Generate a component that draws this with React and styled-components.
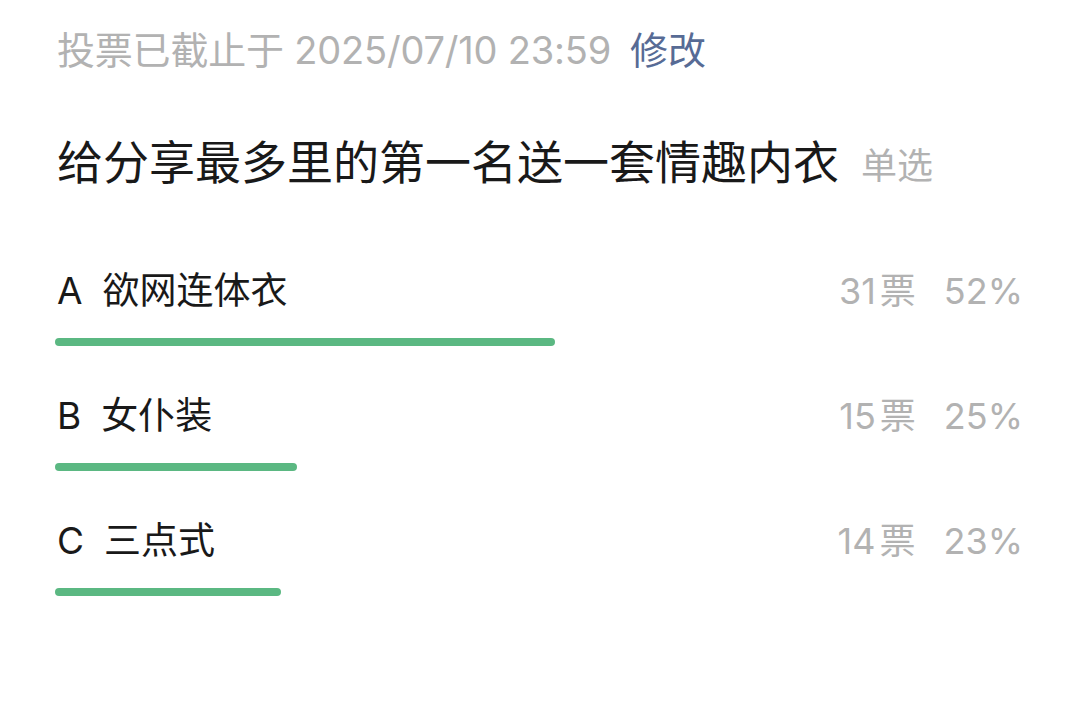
import React from "react";
import styled, { createGlobalStyle } from "styled-components";

const GlobalStyle = createGlobalStyle`
  body {
    margin: 0;
    background: #fff;
    font-family: "Inter", "Noto Sans CJK SC", sans-serif;
  }
`;

const options = [
  { key: "A", name: "欲网连体衣", votes: 31 },
  { key: "B", name: "女仆装", votes: 15 },
  { key: "C", name: "三点式", votes: 14 },
];

const total = options.reduce((sum, o) => sum + o.votes, 0);

const App = () => {
  return (
    <>
      <GlobalStyle />
      <Poll>
        <Deadline>
          投票已截止于 2025/07/10 23:59
          <EditLink>修改</EditLink>
        </Deadline>
        <Title>
          给分享最多里的第一名送一套情趣内衣
          <TypeTag>单选</TypeTag>
        </Title>
        <OptionList>
          {options.map((o) => {
            const pct = (o.votes / total) * 100;
            return (
              <Option key={o.key}>
                <OptionRow>
                  <OptionLabel>
                    <OptionKey>{o.key}</OptionKey>
                    {o.name}
                  </OptionLabel>
                  <Stats>
                    <span>
                      {o.votes}
                      <Unit>票</Unit>
                    </span>
                    <span>{Math.round(pct)}%</span>
                  </Stats>
                </OptionRow>
                <Bar style={{ width: `${pct}%` }} />
              </Option>
            );
          })}
        </OptionList>
      </Poll>
    </>
  );
};

export default App;

const Poll = styled.div`
  padding: 27px 57px 0 55px;
`;

const Deadline = styled.div`
  font-size: 38px;
  line-height: 46px;
  color: #b2b2b2;
  padding-left: 2px;
  letter-spacing: -0.2px;
`;

const EditLink = styled.span`
  color: #576b95;
  margin-left: 19px;
  letter-spacing: 0;
`;

const Title = styled.div`
  margin-top: 61px;
  font-size: 46px;
  line-height: 56px;
  color: #191919;
  padding-left: 2px;
`;

const TypeTag = styled.span`
  font-size: 36px;
  color: #b2b2b2;
  margin-left: 22px;
`;

const OptionList = styled.div`
  margin-top: 67px;
  display: flex;
  flex-direction: column;
  gap: 40px;
`;

const Option = styled.div`
  display: flex;
  flex-direction: column;
  gap: 29px;
`;

const OptionRow = styled.div`
  display: flex;
  justify-content: space-between;
  align-items: baseline;
  height: 48px;
  padding-left: 2px;
`;

const OptionLabel = styled.div`
  font-size: 37px;
  color: #191919;
`;

const OptionKey = styled.span`
  margin-right: 20px;
`;

const Stats = styled.div`
  display: flex;
  align-items: baseline;
  gap: 28px;
  font-size: 36px;
  color: #b2b2b2;
`;

const Unit = styled.span`
  margin-left: 4px;
`;

const Bar = styled.div`
  height: 8px;
  border-radius: 4px;
  background: #5bb882;
`;
